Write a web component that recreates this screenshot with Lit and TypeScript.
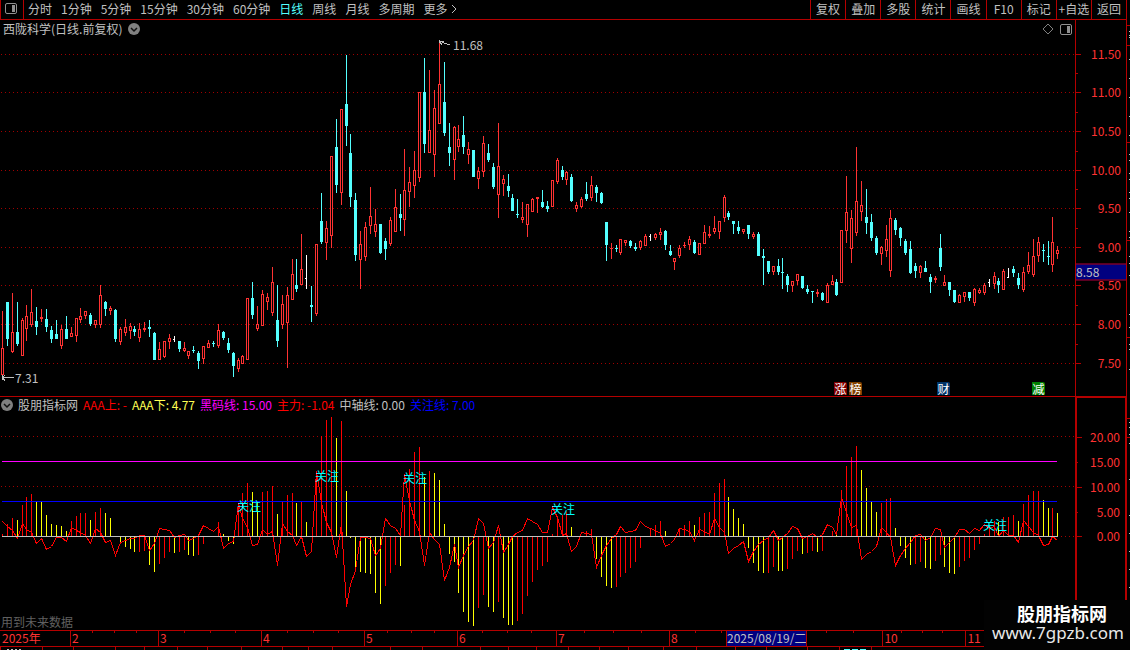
import { LitElement, html, svg, css } from "lit";
import { customElement } from "lit/decorators.js";
import { classMap } from "lit/directives/class-map.js";
import { styleMap } from "lit/directives/style-map.js";

// Chart units: one unit is one row / column of the drawing grid.
const PLOT_W = 1075;
const MAIN = { top: 20, height: 376 };
const SUB = { top: 397, height: 233 };
const ZERO = 536;

// One candle per entry: kind (R rise, C fall, W flat), high, body top, body bottom, low.
const CANDLES = `
R311 348 375 377,C302 302 339 346,R293 332 352 353,C302 332 344 346,R318 320 356 356,R305 316 329 341,R289 312 325 327,C307 321 327 335,
R309 317 319 322,C309 319 327 332,C326 330 339 343,C320 334 339 339,R325 329 346 349,C316 329 339 339,R327 333 337 337,R318 318 336 342,
R308 316 320 323,R311 311 316 319,C313 315 324 326,R320 320 325 328,R285 295 325 328,C301 302 309 316,R306 308 311 315,C309 310 339 342,
R327 329 342 345,R319 327 333 336,R323 326 331 339,C326 329 332 336,R323 329 338 342,R322 328 330 332,C320 327 329 337,C332 333 360 360,
R342 349 360 360,R341 341 357 358,R334 338 342 349,W336 339 340 342,C341 341 349 352,R342 348 351 352,R351 351 356 359,C346 350 351 353,
C351 353 361 369,R346 346 359 364,R340 343 348 348,C341 343 344 347,R324 330 346 348,C331 332 338 340,C338 343 350 353,C352 353 366 377,
R358 360 369 372,R355 356 364 364,R298 298 360 360,C282 298 315 319,R306 324 329 331,R290 294 326 326,R293 297 302 310,R267 282 313 316,
C285 320 341 347,R295 304 325 329,R287 295 323 368,R259 274 300 300,C259 285 289 292,R234 269 285 285,W255 278 279 289,C286 305 307 322,
R244 244 314 316,C193 221 242 244,R221 228 243 260,R156 156 236 248,C119 147 185 193,R109 109 193 205,C55 104 126 146,C134 153 197 207,
C193 200 255 261,R231 244 260 289,R222 227 257 261,R187 216 226 234,R209 224 232 237,C224 224 253 254,C238 241 249 260,R217 220 244 246,
R189 207 232 232,C194 214 218 231,R149 190 220 236,R167 182 192 207,R151 170 186 198,R92 92 178 182,C58 92 144 153,R70 130 153 153,
R90 108 155 177,R42 84 124 124,C62 102 133 136,C123 147 153 166,R126 127 160 180,R125 139 147 152,C116 135 147 154,R142 149 155 164,
C150 150 177 177,R167 171 179 189,R136 143 172 177,C144 153 160 162,C163 167 187 189,R123 166 195 218,R175 179 184 196,C174 186 191 197,
C194 198 211 211,C199 214 215 218,R202 217 220 223,R204 204 225 237,R198 199 212 212,R197 197 199 213,C190 202 207 208,C201 206 209 212,
R180 180 207 207,R158 160 182 184,C166 170 177 180,R171 172 180 185,C174 177 201 202,R202 205 209 212,R197 199 207 208,C182 194 199 201,
R176 185 198 201,C185 187 193 202,C192 193 203 204,C222 222 245 261,R243 248 249 259,C245 248 249 252,R239 239 253 255,R240 240 243 246,
C240 241 246 248,C243 247 249 251,R240 241 248 250,R234 236 246 246,W234 236 237 241,R233 234 238 240,R228 232 235 240,C230 231 245 250,
C245 251 255 256,R258 258 262 270,R245 248 256 258,R242 245 246 248,R236 239 245 250,C240 242 253 254,R243 243 255 255,R225 232 244 244,
R226 234 236 238,R216 228 232 234,R221 221 232 239,R195 197 218 222,C211 213 217 220,C221 221 224 234,C221 227 231 234,R229 229 232 234,
C225 225 234 239,R232 234 237 239,C232 234 256 256,C249 256 258 285,C261 261 272 274,R266 266 272 275,C259 266 272 275,C258 272 273 289,
C274 276 285 292,R281 281 286 292,R274 274 281 285,C276 276 288 289,C285 289 292 294,C291 291 292 303,R289 292 294 297,C292 293 300 301,
R283 285 303 303,R275 281 285 285,C279 282 295 296,R230 230 283 283,R176 212 231 243,R210 218 249 263,R147 201 233 236,R181 205 212 221,
C189 217 223 234,C214 222 238 241,C236 238 253 255,R246 247 254 265,R225 239 251 257,R210 218 271 277,C218 220 230 235,C227 228 238 246,
C239 241 253 255,C241 249 273 274,C263 266 271 278,R265 266 273 278,C261 268 272 272,C274 277 282 293,R276 278 280 283,C234 248 267 271,
R275 282 286 286,C282 282 290 296,C290 290 302 303,R294 295 303 303,R292 292 297 302,C292 292 298 301,R288 289 303 306,R288 290 293 294,
R283 285 293 295,W279 282 283 287,R272 276 284 289,C278 281 285 293,R269 271 290 290,W268 277 278 278,C266 269 273 277,C273 278 285 289,
R267 272 290 292,R252 265 272 274,R239 256 275 277,R237 242 256 262,C244 250 251 262,C241 256 257 265,R217 242 265 272,R246 250 254 259`
  .trim()
  .split(",")
  .map((s) => {
    const t = s.trim();
    const [high, top, bottom, low] = t.slice(1).split(" ").map(Number);
    return { kind: t[0], high, top, bottom, low };
  });

// Histogram of the indicator: colour (R red, Y yellow) and the row where the bar ends.
const BARS = `
R534 R524 R518 Y520 R505 R497 R494 Y502 Y502 Y515 Y524 Y525 Y526 Y531 R521 R516 R513 R513 Y520 R512 R508 Y513 Y518 R536
Y542 Y547 Y549 Y552 R552 R551 Y565 Y572 R564 R558 R552 Y553 R552 R550 Y555 Y556 R555 R544 R536 R536 R522 Y534 Y541 Y544
R503 R493 R483 Y492 Y501 R492 R491 R486 Y514 R502 R495 R493 Y503 R502 Y522 R536 R471 R436 R420 R417 Y438 R421 Y491 Y538
Y571 Y572 Y573 Y574 Y593 Y604 R586 R573 R565 Y566 R505 R469 R452 R447 Y477 R471 Y473 Y480 Y524 Y554 Y562 Y593 Y612 Y622
Y626 R608 R595 Y607 Y612 R602 Y618 Y625 Y625 R621 R614 R596 R582 R570 R566 R562 R534 R516 R515 R511 Y527 R536 R536 R531
R529 Y559 Y577 Y586 Y588 R587 R577 R573 R568 R562 R548 R536 R529 R525 R521 Y531 R536 R536 R528 R525 R521 Y525 R517 R513
R512 R493 R483 R479 Y497 Y509 Y518 Y524 Y548 Y563 Y571 Y573 R573 R567 Y571 Y571 R569 R559 R551 Y554 R553 R551 Y552 R551
R536 R531 Y532 R490 R466 R457 R446 Y470 Y488 Y502 Y512 R503 R499 R498 Y528 Y546 Y558 Y565 R564 R562 Y568 Y569 R561 R555
Y567 Y573 Y574 R567 R561 R558 R550 R544 R534 R527 R521 Y522 R517 R517 R515 Y521 R504 R495 R491 R491 Y500 Y508 R508 Y513`
  .trim()
  .split(/\s+/);

// Main-force line.
const LINE = `
521 526 530 538 523 529 532 543 538 549 546 537 537 541 527 530 532 535 543 528 532 542 540 555
542 540 538 538 535 535 550 543 528 529 530 537 535 534 540 538 535 525 528 531 526 548 543 541
503 518 527 545 544 529 534 531 565 523 531 535 545 536 556 551 471 502 522 532 557 523 606 584
570 537 537 538 555 548 518 525 528 535 474 500 520 531 565 532 539 544 580 567 544 567 555 546
540 518 523 548 542 525 552 544 536 532 530 518 521 524 532 532 507 517 535 533 551 546 532 533
534 567 555 545 538 534 526 532 531 530 521 526 528 530 533 546 543 539 528 529 531 540 529 531
534 518 527 532 553 548 545 541 561 551 544 540 537 530 540 537 533 526 528 538 536 533 537 534
524 527 534 497 512 527 525 559 554 551 546 527 532 537 565 555 548 542 535 534 540 537 528 529
547 542 537 529 529 533 528 530 524 528 526 536 530 535 535 542 520 526 532 535 545 544 536 540`
  .trim()
  .split(/\s+/)
  .map(Number);

const PERIODS = ["分时", "1分钟", "5分钟", "15分钟", "30分钟", "60分钟", "日线", "周线", "月线", "多周期"];
const TOOLS = ["复权", "叠加", "多股", "统计", "画线", "F10", "标记", "+自选", "返回"];

const PRICES = [
  ["11.50", 54], ["11.00", 92], ["10.50", 131], ["10.00", 170], ["9.50", 208],
  ["9.00", 247], ["8.50", 285], ["8.00", 324], ["7.50", 363],
] as const;
const LEVELS = [["20.00", 436], ["15.00", 461], ["10.00", 486], ["5.00", 511], ["0.00", 536]] as const;

const LEGEND = [
  ["AAA上: -", "red"], ["AAA下: 4.77", "yellow"], ["黑码线: 15.00", "magenta"],
  ["主力: -1.04", "red"], ["中轴线: 0.00", "grey"], ["关注线: 7.00", "blue"],
];

const SIGNALS = [[237, 506], [315, 476], [403, 478], [551, 509], [983, 525]];
const EVENTS = [["涨", 834, "up"], ["榜", 849, "rank"], ["财", 937, "fin"], ["减", 1032, "cut"]] as const;

const MONTHS = [
  ["2025年", 70], ["2", 88], ["3", 103], ["4", 103], ["5", 93], ["6", 99], ["7", 113],
  ["8", 57], ["2025/08/19/二", 78], ["", 76], ["10", 83], ["11", 167],
] as const;
const WEEKS = [92, 114, 136, 184, 210, 235, 287, 313, 338, 387, 411, 434, 482, 507, 531, 584, 613, 641, 695, 721, 826, 853, 901, 922, 942];
const TABS = [0, 42, 73, 115, 144, 177, 207, 241, 282, 308, 332, 390, 422, 480, 508, 536, 568, 599, 628, 663, 696, 735, 766, 807, 839, 871];

const SIDE_RULES = [25, 45, 142, 239, 336];
const SIDE_MARKS = [31, 35, 37, 59, 78, 97, 116, 135, 154, 160, 173, 179, 192, 198, 211, 230, 236, 255, 262, 274, 313, 326, 343, 348, 368];
const SIDE_RULES_LOW = [418, 437];
const SIDE_MARKS_LOW = [422, 427, 434, 443, 479, 515, 533, 551, 569, 587];

const columnX = (i: number) => Math.round(1.95 + (i * 54) / 11);
const box = (x: number, y: number, w: number, h: number) => `M${x} ${y}h${w}v${h}h${-w}z`;
const pct = (v: number, from: number, size: number) => `${((v - from) / size) * 100}%`;
const dots = (y: number, from = 1) => svg`<path class="dots" d="M${from} ${y + 0.5}H${PLOT_W}" />`;

function candlePaths() {
  const out = { rise: "", hollow: "", fall: "", flat: "" };
  CANDLES.forEach((c, i) => {
    const x = columnX(i);
    const wick = box(x, c.high, 1, c.low - c.high);
    const h = c.bottom - c.top;
    if (c.kind === "W") out.flat += wick + box(x - 1, c.top, 1, h);
    else if (c.kind === "C") out.fall += wick + box(x - 1, c.top, 3, h);
    else {
      out.rise += wick + box(x - 1, c.top, 3, h);
      if (h > 2) out.hollow += box(x, c.top + 1, 1, h - 2);
    }
  });
  return out;
}

function barPath(colour: string) {
  return BARS.map((b, i) => {
    const y = Number(b.slice(1));
    return b[0] === colour && y !== ZERO ? box(columnX(i), Math.min(y, ZERO), 1, Math.abs(y - ZERO)) : "";
  }).join("");
}

const paneIcon = html`<svg class="pane" width="12" height="11" viewBox="0 0 12 11" aria-hidden="true">
  <rect x="0.5" y="0.5" width="11" height="10" rx="1.5" fill="none" stroke="#909090" />
  <rect x="7" y="2" width="3" height="7" fill="#909090" />
</svg>`;
const chevron = html`<svg width="12" height="12" viewBox="0 0 12 12" aria-hidden="true">
  <circle cx="6" cy="6" r="6" fill="#808080" />
  <path d="M3 5l3 3 3-3" fill="none" stroke="#101010" stroke-width="1.5" />
</svg>`;

@customElement("app-root")
export class AppRoot extends LitElement {
  static styles = css`
    :host {
      display: block;
      background: #000;
      color: #c0c0c0;
      font: 12px/16px "Noto Sans CJK SC", "Noto Sans", sans-serif;
    }
    .screen {
      position: relative;
      display: grid;
      grid-template-columns: minmax(0, 1fr) 52px 3px;
      grid-template-rows: 20px minmax(0, 377fr) minmax(0, 233fr) 17px 3px;
      height: 100vh;
      min-height: 400px;
      overflow: hidden;
    }
    svg { display: block; }
    .stretch { width: 100%; height: 100%; shape-rendering: crispEdges; }
    button {
      font: inherit;
      color: inherit;
      background: none;
      border: 0;
      margin: 0;
      padding: 0;
      white-space: nowrap;
      cursor: pointer;
    }
    .bar {
      grid-column: 1 / 3;
      display: flex;
      box-sizing: border-box;
      border-bottom: 1px solid #b40000;
      border-right: 1px solid #b40000;
      border-left: 1px solid #b40000;
    }
    .bar button { padding-bottom: 2px; }
    .bar .toggle {
      display: grid;
      place-items: center;
      width: 23px;
      padding-right: 2px;
      border-right: 1px solid #b40000;
    }
    .periods {
      display: flex;
      gap: 9px;
      padding-left: 4px;
      flex: 1;
      min-width: 0;
      overflow: hidden;
    }
    .periods .on { color: #54ffff; }
    .more { display: flex; align-items: center; gap: 4px; }
    .tools { display: grid; grid-template-columns: repeat(9, 1fr); width: 316px; }
    .tools button { border-left: 1px solid #b40000; }
    .main { position: relative; border-bottom: 1px solid #b40000; min-height: 0; }
    .sub { position: relative; min-height: 0; }
    .caption {
      position: absolute;
      top: 1px;
      left: 3px;
      right: 3px;
      display: flex;
      align-items: center;
      gap: 6px;
    }
    .caption .push { margin-left: auto; }
    .legend {
      position: absolute;
      top: 0;
      left: 1px;
      display: flex;
      align-items: center;
      gap: 5px;
      white-space: nowrap;
    }
    .red { color: #ff0000; }
    .yellow { color: #ffff54; }
    .magenta { color: #ff00ff; }
    .blue { color: #0000ff; }
    .grey { color: #c0c0c0; }
    .dots { stroke: #a00000; stroke-dasharray: 1 3; fill: none; }
    .rise { fill: #ff3232; }
    .hollow { fill: #000; }
    .fall { fill: #54ffff; }
    .flat { fill: #fff; }
    .tag { position: absolute; transform: translateY(-50%); white-space: nowrap; }
    .signal { color: #00ffff; }
    .event {
      position: absolute;
      width: 13px;
      height: 13px;
      line-height: 13px;
      text-align: center;
      color: #fff;
      border-top-right-radius: 2px;
    }
    .up { background: #800000; }
    .rank { background: #804000; }
    .fin { background: #003468; }
    .cut { background: #008000; }
    .note { position: absolute; left: 1px; bottom: 0; color: #606060; }
    .axis {
      position: relative;
      box-sizing: border-box;
      border: solid #b40000;
      border-width: 0 1px 1px;
      color: #ff3232;
    }
    .axis.low { border-width: 1px 2px 0; }
    .axis .tag { right: 5px; }
    .axis .stretch { position: absolute; inset: 0; }
    .axis .current {
      right: 0;
      left: 0;
      height: 15px;
      line-height: 13px;
      background: #000080;
      color: #c0c0c0;
      border: solid #b40000;
      border-width: 1px 0;
    }
    .side { min-height: 0; }
    .dates {
      position: relative;
      grid-column: 1 / -1;
      display: flex;
      box-sizing: border-box;
      border: solid #b40000;
      border-width: 1px 0;
      line-height: 14px;
      color: #ff3232;
    }
    .dates svg { position: absolute; inset: 0; }
    .month {
      box-sizing: border-box;
      flex: none;
      padding-left: 1px;
      border-left: 1px solid #b40000;
      white-space: nowrap;
    }
    .month:first-of-type { border-left-color: transparent; }
    .month.picked { background: #000080; color: #c0c0c0; padding-left: 0; min-width: max-content; }
    .tabs { grid-column: 1 / -1; }
    .mark {
      position: absolute;
      right: 0;
      bottom: 0;
      width: 146px;
      height: 50px;
      box-sizing: border-box;
      padding-top: 3px;
      background: #020202;
      color: #fff;
      text-align: center;
    }
    .mark-name { font-size: 18px; font-weight: 700; line-height: 20px; padding-left: 10px; }
    .mark-site { font: 17px/20px "Noto Sans", sans-serif; color: #e8e8e8; padding-left: 2px; }
  `;

  private toolbar() {
    return html`<header class="bar">
      <button class="toggle" aria-label="侧栏">${paneIcon}</button>
      <nav class="periods">
        ${PERIODS.map((p) => html`<button class=${classMap({ on: p === "日线" })}>${p}</button>`)}
        <button class="more">更多
          <svg width="6" height="10" viewBox="0 0 6 10" aria-hidden="true"><path d="M1 1l4 4-4 4" fill="none" stroke="#c0c0c0" /></svg>
        </button>
      </nav>
      <div class="tools">${TOOLS.map((t) => html`<button>${t}</button>`)}</div>
    </header>`;
  }

  private tag(text: string, x: number, y: number, area: { top: number; height: number }, cls = "") {
    return html`<span class="tag ${cls}" style=${styleMap({ left: pct(x, 0, PLOT_W), top: pct(y, area.top, area.height) })}>${text}</span>`;
  }

  private mainPlot() {
    const p = candlePaths();
    return html`<section class="main">
      <svg class="stretch" viewBox="0 20 1075 376" preserveAspectRatio="none">
        ${PRICES.map(([, y]) => dots(y))}
        <path class="rise" d=${p.rise} />
        <path class="hollow" d=${p.hollow} />
        <path class="fall" d=${p.fall} />
        <path class="flat" d=${p.flat} />
        <path d="M439.500 43V39.500M440 41.500h4M440 42l2 3M442 42.500l8 2.500" fill="none" stroke="#c0c0c0" />
        <path d="M2 377.500h12M2.500 375v5M3 378l2 3M3 377l2-2" fill="none" stroke="#c0c0c0" />
      </svg>
      <div class="caption">
        <span>西陇科学(日线.前复权)</span>${chevron}
        <svg class="push" width="12" height="12" viewBox="0 0 12 12" aria-hidden="true"><path d="M6 1l5 5-5 5-5-5z" fill="none" stroke="#808080" /></svg>
        ${paneIcon}
      </div>
      ${this.tag("11.68", 453, 45, MAIN)} ${this.tag("7.31", 15, 378, MAIN)}
      ${EVENTS.map(([t, x, c]) => html`<span class="event ${c}" style=${styleMap({ left: pct(x, 0, PLOT_W), top: pct(382, MAIN.top, MAIN.height) })}>${t}</span>`)}
    </section>`;
  }

  private subPlot() {
    return html`<section class="sub">
      <svg class="stretch" viewBox="0 397 1075 233" preserveAspectRatio="none">
        ${dots(436)} ${dots(486)} ${dots(536, 1057)}
        <path d=${barPath("R")} fill="#ff0000" />
        <path d=${barPath("Y")} fill="#ffff00" />
        <path d="M2 461.500H1057" stroke="#ff00ff" />
        <path d="M2 501.500H1057" stroke="#0000ff" />
        <polyline points=${LINE.map((y, i) => `${columnX(i) + 0.5},${y + 0.5}`).join(" ")} fill="none" stroke="#ff0000" />
        <path d="M2 536.500H1058" stroke="#c0c0c0" />
      </svg>
      <div class="legend">
        ${chevron}<span class="grey">股朋指标网</span>
        ${LEGEND.map(([t, c]) => html`<span class=${c}>${t}</span>`)}
      </div>
      ${SIGNALS.map(([x, y]) => this.tag("关注", x, y, SUB, "signal"))}
      <span class="note">用到未来数据</span>
    </section>`;
  }

  private axis(rows: readonly (readonly [string, number])[], area: { top: number; height: number }, low: boolean, minor: number[]) {
    return html`<div class="axis ${low ? "low" : ""}">
      <svg class="stretch" viewBox="0 ${area.top} 50 ${area.height}" preserveAspectRatio="none">
        ${rows.map(([t, y]) => svg`<path d="M0 ${y + 0.5}h${low && t.includes("5") ? 1 : 5}" stroke="#b40000" />`)}
        ${minor.map((y) => svg`<path d="M0 ${y + 0.5}h2" stroke="#b40000" />`)}
      </svg>
      ${rows.map(([t, y]) => html`<span class="tag" style=${styleMap({ top: pct(y, area.top, area.height) })}>${t}</span>`)}
      ${low ? "" : html`<span class="tag current" style=${styleMap({ top: pct(271.5, area.top, area.height) })}>8.58</span>`}
    </div>`;
  }

  private side(rules: number[], marks: number[], area: { top: number; height: number }) {
    return html`<div class="side">
      <svg class="stretch" viewBox="0 ${area.top} 3 ${area.height}" preserveAspectRatio="none">
        ${rules.map((y) => svg`<path d="M0 ${y + 0.5}h3" stroke="#b40000" />`)}
        ${marks.map((y) => svg`<path d="M2 ${y + 0.5}h1" stroke="#c0c0c0" />`)}
      </svg>
    </div>`;
  }

  render() {
    return html`<main class="screen">
      ${this.toolbar()}
      <div class="side"></div>
      ${this.mainPlot()} ${this.axis(PRICES, MAIN, false, [73, 112, 151, 189, 228, 305, 344])}
      ${this.side(SIDE_RULES, SIDE_MARKS, MAIN)}
      ${this.subPlot()} ${this.axis(LEVELS, SUB, true, [])}
      ${this.side(SIDE_RULES_LOW, SIDE_MARKS_LOW, SUB)}
      <div class="dates">
        ${MONTHS.map(([t, w]) => html`<span class=${classMap({ month: true, picked: t.includes("/") })} style=${styleMap({ width: pct(w, 0, 1130) })}>${t}</span>`)}
        <svg class="stretch" viewBox="0 0 1130 15" preserveAspectRatio="none">
          ${WEEKS.map((x) => svg`<path d="M${x + 0.5} 0v2" stroke="#b40000" />`)}
        </svg>
      </div>
      <svg class="stretch tabs" viewBox="0 647 1130 3" preserveAspectRatio="none">
        ${TABS.map((x) => svg`<path d="M${x + 0.5} 647v3" stroke="#b40000" />`)}
        <path d="M7 649.500h14" stroke="#c0c0c0" stroke-dasharray="2 2" />
        <path d="M844 649.500h22" stroke="#54ffff" stroke-dasharray="6 2" />
      </svg>
      <aside class="mark">
        <div class="mark-name">股朋指标网</div>
        <div class="mark-site">www.7gpzb.com</div>
      </aside>
    </main>`;
  }
}
